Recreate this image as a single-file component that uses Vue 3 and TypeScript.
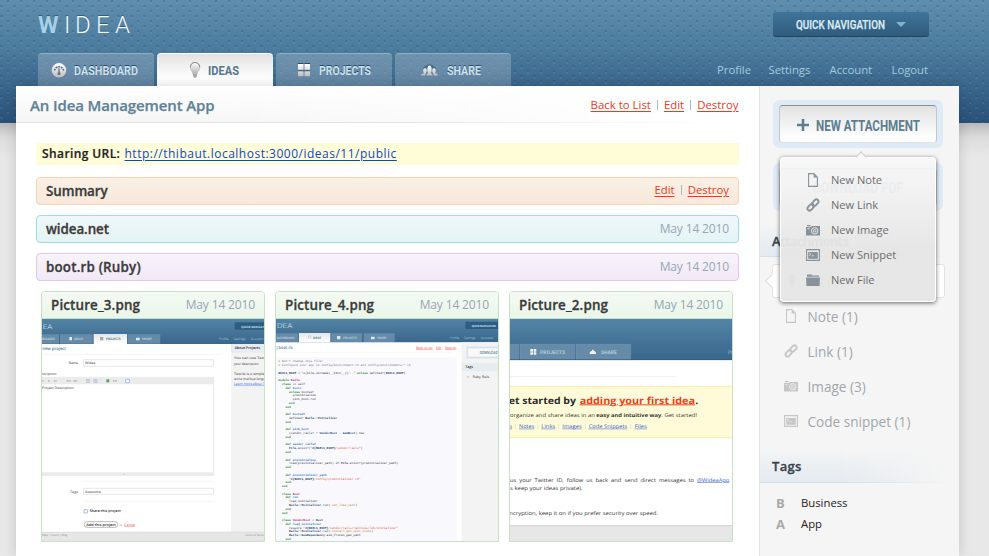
<script setup lang="ts">
type Segment = [kind: string, text: string]
interface Tab { label: string; width: number; icon: string; active?: boolean }
interface Label { x: number; y: number; w: number; text: string; cls: string }

const tabs: Tab[] = [
  { label: 'DASHBOARD', width: 64, icon: 'gauge' },
  { label: 'IDEAS', width: 31, icon: 'bulb', active: true },
  { label: 'PROJECTS', width: 52, icon: 'grid' },
  { label: 'SHARE', width: 34, icon: 'people' },
]
const userLinks = ['Profile', 'Settings', 'Account', 'Logout']
const menu = [
  { icon: 'note', label: 'New Note' },
  { icon: 'link', label: 'New Link' },
  { icon: 'image', label: 'New Image' },
  { icon: 'snippet', label: 'New Snippet' },
  { icon: 'file', label: 'New File' },
]
const filters = [
  { icon: 'note', label: 'Note (1)' },
  { icon: 'link', label: 'Link (1)' },
  { icon: 'image', label: 'Image (3)' },
  { icon: 'snippet', label: 'Code snippet (1)' },
]
const tags = [
  { letter: 'B', name: 'Business' },
  { letter: 'A', name: 'App' },
]
const pictures = [
  { name: 'Picture_3.png', box: '36 102 666 666' },
  { name: 'Picture_4.png', box: '33 102 666 666' },
  { name: 'Picture_2.png', box: '30 102 666 666' },
]

const l = (x: number, y: number, w: number, text: string, cls: string): Label => ({ x, y, w, text, cls })

const formLabels: Label[] = [
  l(38, 131, 29, 'EA', 'logo'),
  l(634, 128, 84, 'QUICK NAVIGATION', 'nav'),
  l(22, 166, 52, 'SHBOARD', 'tab'), l(132, 166, 27, 'IDEAS', 'tab'),
  l(228, 166, 44, 'PROJECTS', 'tab-on'), l(336, 166, 29, 'SHARE', 'tab'),
  l(566, 165, 30, 'Profile', 'user'), l(611, 165, 36, 'Settings', 'user'), l(662, 165, 38, 'Account', 'user'),
  l(37, 196, 71, 'new project', 'head'), l(614, 193, 76, 'About Projects', 'bold'),
  l(116, 238, 28, 'Name', 'body'), l(165, 237, 31, 'Widea', 'body'), l(30, 270, 49, 'escription', 'body'),
  l(36, 313, 95, 'Project Description', 'body'), l(120, 625, 24, 'Tags', 'body'), l(165, 623, 48, 'Awesome', 'body'),
  l(179, 682, 93, 'Share this project', 'bold'), l(169, 722, 88, 'Add this project', 'bold'),
  l(268, 722, 10, 'or', 'dim'), l(283, 722, 32, 'Cancel', 'red'),
  l(612, 223, 96, 'You can use Texti', 'body'), l(612, 239, 76, 'your description.', 'body'),
  l(612, 271, 92, 'Textile is a simple', 'body'), l(612, 286, 94, 'write markup langu', 'body'),
  l(612, 301, 92, 'Learn more about T', 'blue'),
  l(36, 754, 76, 'Help | Forum | Blog', 'dim'), l(645, 754, 58, 'Terms of Servic', 'dim'),
]
const codeLabels: Label[] = [
  l(36, 129, 46, 'DEA', 'logo'), l(620, 125, 72, 'QUICK NAVIGATION', 'nav'),
  l(36, 163, 52, 'DASHBOARD', 'tab'), l(144, 163, 24, 'IDEAS', 'tab-on'),
  l(234, 163, 41, 'PROJECTS', 'tab'), l(337, 163, 27, 'SHARE', 'tab'),
  l(555, 162, 28, 'Profile', 'user'), l(597, 162, 35, 'Settings', 'user'), l(647, 162, 37, 'Account', 'user'),
  l(34, 192, 49, ') boot.rb', 'head'),
  l(453, 191, 50, 'Back to List', 'red'), l(513, 191, 16, 'Edit', 'red'), l(540, 191, 34, 'Destroy', 'red'),
  l(644, 206, 54, 'DOWNLOAD', 'head'), l(601, 250, 23, 'Tags', 'bold'), l(606, 278, 6, 'R', 'dim'), l(623, 278, 49, 'Ruby, Rails', 'body'),
]
const startLabels: Label[] = [
  l(120, 207, 75, 'PROJECTS', 'tab big'), l(303, 207, 47, 'SHARE', 'tab big'), l(684, 206, 42, 'Profile', 'user big'),
  l(26, 356, 202, 'et started by', 'title'), l(239, 356, 346, 'adding your first idea', 'title-link'), l(586, 356, 9, '.', 'title'),
  l(30, 395, 255, 'organize and share ideas in an', 'text'), l(289, 395, 195, 'easy and intuitive way', 'text strong'),
  l(484, 395, 107, '. Get started!', 'text'),
  l(29, 430, 7, 's', 'text blue'), l(45, 430, 3, '|', 'text'), l(57, 430, 46, 'Notes', 'text blue'), l(112, 430, 3, '|', 'text'),
  l(124, 430, 42, 'Links', 'text blue'), l(175, 430, 3, '|', 'text'), l(187, 430, 58, 'Images', 'text blue'),
  l(254, 430, 3, '|', 'text'), l(266, 430, 116, 'Code Snippets', 'text blue'), l(391, 430, 3, '|', 'text'), l(404, 430, 36, 'Files', 'text blue'),
  l(30, 591, 552, 'us  your  Twitter  ID,  follow  us  back  and  send  direct  messages  to', 'text'), l(591, 591, 97, '@WideaApp', 'text blue'),
  l(30, 616, 218, 's keep your ideas private).', 'text'),
  l(28, 691, 446, 'ncryption, keep it on if you prefer security over speed.', 'text'),
]

const k = (text: string): Segment => ['key', text]
const f = (text: string): Segment => ['fn', text]
const s = (text: string): Segment => ['str', text]
const p = (text: string): Segment => ['plain', text]
const c = (text: string): Segment => ['const', text]
const y = (text: string): Segment => ['sym', text]
const code: Segment[][] = [
  [['com', "# Don't change this file!"]],
  [['com', '# Configure your app in config/environment.rb and config/environments/*.rb']],
  [],
  [c('RAILS_ROOT'), p(' = '), s('"'), p('#{File.dirname(__FILE__)}'), s('/.."'), k(' unless '), p('defined?('), c('RAILS_ROOT'), p(')')],
  [],
  [k('module '), ['cls', 'Rails']],
  [k('  class '), p('<< self')],
  [k('    def '), f('boot!')],
  [k('      unless '), p('booted?')],
  [p('        preinitialize')],
  [p('        pick_boot.run')],
  [k('      end')],
  [k('    end')],
  [],
  [k('    def '), f('booted?')],
  [p('      defined? '), c('Rails::Initializer')],
  [k('    end')],
  [],
  [k('    def '), f('pick_boot')],
  [p('      (vendor_rails? ? '), c('VendorBoot'), p(' : '), c('GemBoot'), p(').new')],
  [k('    end')],
  [],
  [k('    def '), f('vendor_rails?')],
  [c('      File'), p('.exist?('), s('"'), c('#{RAILS_ROOT}'), s('/vendor/rails"'), p(')')],
  [k('    end')],
  [],
  [k('    def '), f('preinitialize')],
  [p('      load(preinitializer_path) '), k('if '), c('File'), p('.exist?(preinitializer_path)')],
  [k('    end')],
  [],
  [k('    def '), f('preinitializer_path')],
  [s('      "'), c('#{RAILS_ROOT}'), s('/config/preinitializer.rb"')],
  [k('    end')],
  [k('  end')],
  [],
  [k('  class '), ['cls', 'Boot']],
  [k('    def '), f('run')],
  [p('      load_initializer')],
  [c('      Rails::Initializer'), p('.run('), y(':set_load_path'), p(')')],
  [k('    end')],
  [k('  end')],
  [],
  [k('  class '), ['cls', 'VendorBoot'], p(' < '), c('Boot')],
  [k('    def '), f('load_initializer')],
  [p('      require '), s('"'), c('#{RAILS_ROOT}'), s('/vendor/rails/railties/lib/initializer"')],
  [c('      Rails::Initializer'), p('.run('), y(':install_gem_spec_stubs'), p(')')],
  [c('      Rails::GemDependency'), p('.add_frozen_gem_path')],
  [k('    end')],
]
</script>

<template>
  <svg class="defs" aria-hidden="true">
    <defs>
      <linearGradient id="silver" x1="0" y1="0" x2="0" y2="1">
        <stop offset="0" stop-color="#fff" /><stop offset="1" stop-color="#bdbdbd" />
      </linearGradient>
      <linearGradient id="sky" x1="0" y1="0" x2="0" y2="1">
        <stop offset="0" stop-color="#5384a5" /><stop offset="1" stop-color="#3a668c" />
      </linearGradient>
      <linearGradient id="bulb-fill" x1="0" y1="0" x2="0" y2="1">
        <stop offset="0" stop-color="#fff" /><stop offset="1" stop-color="#b5b5b5" />
      </linearGradient>
      <linearGradient id="tab-fill" x1="0" y1="0" x2="0" y2="1">
        <stop offset="0" stop-color="#e6e6e6" /><stop offset="1" stop-color="#fff" />
      </linearGradient>
    </defs>
    <symbol id="note" viewBox="0 0 14 14">
      <path d="M2.600.600h5.200l3.600 3.600v9.200H2.600z" fill="none" stroke="currentColor" stroke-width="1.100" />
      <path d="M7.600.600v3.900h3.900z" fill="currentColor" />
    </symbol>
    <symbol id="link" viewBox="0 0 14 14">
      <g fill="none" stroke="currentColor" stroke-width="1.900" stroke-linecap="round">
        <path d="M6.100 5.100 8.700 2.200c2.200-2.100 5.200.500 3.300 2.700L9.700 7.400C8.700 8.400 7.300 8.300 6.500 7.400" />
        <path d="M7.900 8.900 5.300 11.800C3.100 13.900.100 11.300 2 9.100L4.300 6.600C5.300 5.600 6.700 5.700 7.500 6.600" />
      </g>
    </symbol>
    <symbol id="image" viewBox="0 0 14 14">
      <path d="M0 4h5l1-1h8v9.500H0z M1 2h3.500v1.200H1z" fill="currentColor" />
      <circle cx="8.700" cy="7.800" r="3.200" fill="none" stroke="#f1f1f1" stroke-width=".9" />
      <circle cx="8.700" cy="7.800" r="1.300" fill="none" stroke="#f1f1f1" stroke-width=".8" />
      <path d="M1.500 5.200h2v1h-2z" fill="#f1f1f1" />
    </symbol>
    <symbol id="snippet" viewBox="0 0 14 14">
      <path d="M.6 1.600h12.800v10.800H.6z" fill="none" stroke="currentColor" stroke-width="1.100" />
      <path d="M2.200 4h9.600v6.800H2.200z" fill="currentColor" />
      <path d="m3.300 5 1.600 1.300-1.600 1.300M5.800 7.800h2" fill="none" stroke="#f1f1f1" stroke-width=".8" />
    </symbol>
    <symbol id="file" viewBox="0 0 14 14">
      <path d="M1 1.500h4.500l.8 1H13v1.300H1z M0 4.600h14L13.500 13H.5z" fill="currentColor" />
    </symbol>
    <symbol id="bulb" viewBox="0 0 14 18">
      <path d="M4.700 12.500C4.500 9.800 2 8.200 2 5.400a5 4.900 0 0 1 10 0c0 2.800-2.500 4.400-2.700 7.100z" fill="url(#bulb-fill)" stroke="#b3b3b3" stroke-width=".8" />
      <path d="M2 5.400a5 4.900 0 0 1 10 0" fill="none" stroke="#888" />
      <path d="M4.800 12.600h4.400v2L8 16.600H6l-1.200-2z" fill="#a9a9a9" />
    </symbol>
    <symbol id="bulb-solid" viewBox="0 0 14 18">
      <path d="M4.700 12.500C4.500 9.800 2 8.200 2 5.400a5 4.900 0 0 1 10 0c0 2.800-2.500 4.400-2.700 7.100v2L8 16.600H6l-1.300-2z" fill="currentColor" />
    </symbol>
    <symbol id="gauge" viewBox="0 0 16 16">
      <circle cx="8" cy="8.300" r="7.200" fill="url(#silver)" />
      <path d="M3.400 8.500a4.700 4.700 0 0 1 9.200 0" fill="none" stroke="#5c7287" stroke-width="1.500" stroke-dasharray="2 .7" />
      <path d="M8 6.300v4" stroke="#5c7287" stroke-width="1.300" /><circle cx="8" cy="11.500" r="1.500" fill="#5c7287" />
    </symbol>
    <symbol id="grid" viewBox="0 0 14 14">
      <path d="M1 0h5.500v1H1zM7.500 0H13v1H7.500zM1 7.400h12v1H1z" fill="#244b68" />
      <path d="M1 1h5.500v5.700H1zM7.500 1H13v5.700H7.500zM1 8.300h5.500v5H1zM7.500 8.300H13v5H7.500z" fill="url(#silver)" />
    </symbol>
    <symbol id="people" viewBox="0 0 18 14">
      <path d="M5.500 1.500 9 0l3.500 1.500L16 4l-2 3H4L2 4z" fill="#244b68" opacity=".5" />
      <path d="M5.700 12.500c0-2 1.800-1.600 1.800-3C6 8 6.300 1.700 9 1.700s3 6.300 1.500 7.800c0 1.400 1.800 1 1.800 3zM0 12.500c.2-2.400 3-1.500 3-3-1.300-2-.8-5 1.300-5C6 4.500 6 6 6 7.300c0 2-1.700 2.600-1.700 5.200zM18 12.500c-.2-2.400-3-1.500-3-3 1.300-2 .8-5-1.300-5C12 4.500 12 6 12 7.300c0 2 1.700 2.600 1.700 5.200z" fill="url(#silver)" />
    </symbol>
  </svg>

  <div class="screen">
    <header class="top">
      <div class="brand-row">
        <svg class="logo" width="100" height="28" role="img" aria-label="Widea">
          <g class="logo-shade" aria-hidden="true"><text y="20.500" x="0" class="w">W</text><text y="20.500" x="26 37 58 77">IDEA</text></g>
          <g class="logo-text"><text y="21.500" x="0" class="w">W</text><text y="21.500" x="26 37 58 77">IDEA</text></g>
        </svg>
        <button class="quick">
          <svg width="89" height="16"><text x="0" y="13" textLength="89" lengthAdjust="spacingAndGlyphs">QUICK NAVIGATION</text></svg>
          <span class="arrow" />
        </button>
      </div>
      <div class="nav-row">
        <nav class="tabs">
          <a v-for="t in tabs" :key="t.label" class="tab" :class="[t.icon + '-tab', { active: t.active }]">
            <svg class="tab-icon" :class="t.icon"><use :href="'#' + t.icon" /></svg>
            <svg class="tab-label" :width="t.width" height="18">
              <text v-if="!t.active" class="shade" x="0" y="12.500" :textLength="t.width" lengthAdjust="spacingAndGlyphs" aria-hidden="true">{{ t.label }}</text>
              <text x="0" y="13.500" :textLength="t.width" lengthAdjust="spacingAndGlyphs">{{ t.label }}</text>
            </svg>
          </a>
        </nav>
        <nav class="user"><a v-for="u in userLinks" :key="u" :class="u.toLowerCase()">{{ u }}</a></nav>
      </div>
    </header>

    <div class="page">
      <main class="main">
        <div class="title-bar">
          <h1>An Idea Management App</h1>
          <div class="actions"><a>Back to List</a><i /><a>Edit</a><i /><a>Destroy</a></div>
        </div>
        <div class="content">
          <p class="sharing"><b>Sharing URL:</b><a>http://thibaut.localhost:3000/ideas/11/public</a></p>
          <section class="bar peach"><h2>Summary</h2><div class="actions"><a>Edit</a><i /><a>Destroy</a></div></section>
          <section class="bar aqua"><h2>widea.net</h2><time>May 14 2010</time></section>
          <section class="bar violet"><h2 class="wide">boot.rb (Ruby)</h2><time>May 14 2010</time></section>
          <div class="pictures">
            <article v-for="(pic, i) in pictures" :key="pic.name" class="card">
              <div class="card-head"><h2>{{ pic.name }}</h2><time>May 14 2010</time></div>
              <svg class="thumb" :viewBox="pic.box">
                <template v-if="i === 0">
                  <path fill="#fff" d="M30 102h680v670H30z" /><path fill="url(#sky)" d="M30 102h680v75H30z" />
                  <path fill="#668ba8" d="M30 148h57v28H30zM90 148h98v28H90zM293 148h98v28H293z" />
                  <path fill="url(#tab-fill)" d="M191 147h100v30H191z" />
                  <rect x="614" y="112" width="110" height="22" rx="2" fill="#2e5d82" />
                  <path fill="#f3f3f3" d="M603 177h100v564H603z" /><path fill="#e7edf1" d="M603 177h100v26H603z" />
                  <path stroke="#e3e3e3" d="M36 208h540M160 589h392M160 649h392" />
                  <path fill="#dfeaf0" d="M118 156h8v10h-8zM318 158h11v8h-11z" /><path fill="#aaa" d="M210 156h10v10h-10z" />
                  <path fill="#fff" stroke="#ddd" stroke-width="2" d="M161 224h390v20H161zM161 610h390v18H161zM30 277h521v294H30z" />
                  <path fill="#ebebeb" d="M30 278h520v20H30zM30 562h520v8H30z" />
                  <path stroke="#999" stroke-width="3" stroke-dasharray="4 1" d="M37 288h4M54 288h6M72 288h8M110 288h12M130 288h12M249 288h12" />
                  <path stroke="#9bb4d3" stroke-width="2" d="M168 284h12M190 284h12M168 288h12M190 288h12M168 292h12M190 292h12" /><path fill="#59a079" d="M229 283h9v9h-9z" />
                  <path fill="#fff" stroke="#7ba3dc" stroke-width="2" d="M287 283h11v10h-11zM162 674h10v10h-10z" />
                  <path fill="#aaa" d="M281 566h4v2h-4z" />
                  <rect x="163" y="710" width="100" height="17" rx="8" fill="#fff" stroke="#777" stroke-width="1.500" />
                  <path fill="#e6e6e6" d="M30 741h680v30H30z" /><path stroke="#ccc" d="M30 741h680" />
                  <text v-for="(t, n) in formLabels" :key="n" :x="t.x" :y="t.y" :textLength="t.w" lengthAdjust="spacingAndGlyphs" :class="t.cls">{{ t.text }}</text>
                </template>
                <template v-else-if="i === 1">
                  <path fill="#fff" d="M30 102h680v670H30z" /><path fill="url(#sky)" d="M30 102h680v70H30z" />
                  <path fill="#668ba8" d="M30 145h70v26H30zM199 145h92v26h-92zM296 145h93v26h-93z" />
                  <path fill="url(#tab-fill)" d="M102 144h94v28h-94z" />
                  <rect x="601" y="110" width="110" height="22" rx="2" fill="#2e5d82" />
                  <path fill="#dfeaf0" d="M216 153h10v10h-10zM318 155h11v8h-11z" /><circle cx="134" cy="156" r="4" fill="#eee" stroke="#999" />
                  <path fill="#f3f3f3" d="M590 172h115v600H590z" /><path fill="#e6ecf0" d="M590 235h112v24H590z" />
                  <rect x="603" y="184" width="110" height="37" rx="5" fill="#dceaf5" /><rect x="608" y="189" width="110" height="27" rx="3" fill="#f9f9f9" stroke="#bbb" />
                  <path stroke="#e6e6e6" d="M30 202h530" /><path fill="#f8f8fd" d="M30 216h545v556H30z" />
                  <text v-for="(t, n) in codeLabels" :key="n" :x="t.x" :y="t.y" :textLength="t.w" lengthAdjust="spacingAndGlyphs" :class="t.cls">{{ t.text }}</text>
                  <text v-for="(line, n) in code" :key="'c' + n" class="code" x="40" :y="232 + n * 11.340"><tspan v-for="(seg, m) in line" :key="m" :class="seg[0]">{{ seg[1] }}</tspan></text>
                </template>
                <template v-else>
                  <path fill="#fff" d="M28 102h680v670H28z" /><path fill="url(#sky)" d="M28 102h680v123H28z" />
                  <path fill="#668ba8" stroke="#89a8bf" d="M20 178h36v46H20zM60 178h164v46H60zM228 178h164v46H228z" />
                  <path stroke="#2c5678" stroke-width="2" d="M28 224h680" />
                  <path fill="#f0f3f4" d="M91 192h8v8h-8zM101 192h8v8h-8zM91 202h8v7h-8zM101 202h8v7h-8zM269 207v-4l4-5h3v-4h5v4h3l4 5v4z" />
                  <path stroke="#e9e9e9" stroke-width="2" d="M28 275h500" />
                  <path fill="#fffbd8" d="M28 304h680v154H28z" /><path stroke="#ffe9a8" stroke-width="3" d="M28 304h680M28 458h680" />
                  <path fill="#e7e7e7" d="M28 721h680v50H28z" /><path stroke="#d4d4d4" stroke-width="3" d="M28 722h680" />
                  <text v-for="(t, n) in startLabels" :key="n" :x="t.x" :y="t.y" :textLength="t.w" lengthAdjust="spacingAndGlyphs" :class="t.cls">{{ t.text }}</text>
                </template>
              </svg>
            </article>
          </div>
        </div>
      </main>

      <aside class="side">
        <div class="glow">
          <button class="big-button">
            <svg class="plus" viewBox="0 0 12 12"><path d="M6 0v12M0 6h12" stroke="#5b7f90" stroke-width="2.600" /></svg>
            <svg width="104" height="18"><text x="0" y="14.500" textLength="104" lengthAdjust="spacingAndGlyphs">NEW ATTACHMENT</text></svg>
          </button>
          <div class="popover">
            <span class="tip" />
            <a v-for="m in menu" :key="m.label" :class="m.icon"><svg><use :href="'#' + m.icon" /></svg>{{ m.label }}</a>
          </div>
        </div>
        <div class="glow">
          <button class="big-button download"><svg width="90" height="18"><text x="0" y="14" textLength="90" lengthAdjust="spacingAndGlyphs">DOWNLOAD PDF</text></svg></button>
        </div>
        <h3 class="attachments">Attachments</h3>
        <div class="filters">
          <a class="filter on"><span class="notch" /><svg><use href="#bulb-solid" /></svg>All (6)</a>
          <a v-for="m in filters" :key="m.label" class="filter"><svg><use :href="'#' + m.icon" /></svg>{{ m.label }}</a>
        </div>
        <h3>Tags</h3>
        <ul class="tags"><li v-for="t in tags" :key="t.name"><b>{{ t.letter }}</b>{{ t.name }}</li></ul>
      </aside>
    </div>
  </div>
</template>

<style>
body { background: #e8e8e8; overflow: hidden; }
</style>

<style scoped>
.defs { position: absolute; width: 0; height: 0; }
.screen {
  height: 556px; overflow: hidden; box-sizing: border-box;
  font-family: "Open Sans", "Noto Sans", sans-serif; color: #333;
  background: linear-gradient(#b9b9b9, #dcdcdc 14px, #e8e8e8 34px) 0 123px / 100% 433px no-repeat;
}
h1, h2, h3, p, ul { margin: 0; padding: 0; }
button { border: 0; padding: 0; }
.top {
  height: 123px; box-sizing: border-box; padding: 12px 60px 0 38px;
  background:
    radial-gradient(circle at 1.500px 6px, rgba(25, 65, 100, .2) 0 1px, transparent 1.500px) 0 0 / 13px 10px,
    radial-gradient(circle at 8px 1px, rgba(25, 65, 100, .2) 0 1px, transparent 1.500px) 0 0 / 13px 10px,
    radial-gradient(circle at 1.500px 8px, rgba(135, 190, 220, .12) 0 1px, transparent 1.500px) 0 0 / 13px 10px,
    radial-gradient(circle at 8px 3px, rgba(135, 190, 220, .12) 0 1px, transparent 1.500px) 0 0 / 13px 10px,
    linear-gradient(#5f8dad, #4b7b9d 40%, #386389 75%, #2a5078);
}
.brand-row { display: flex; justify-content: space-between; height: 41px; align-items: flex-start; }
.logo { display: block; margin-top: -1px; }
.logo text { font: 300 24px Roboto, sans-serif; }
.logo text.w { font-weight: 700; font-size: 23.500px; }
.logo-shade { fill: #2c5576; opacity: .8; }
.logo-text { fill: #f2f9fc; }
.logo-text .w { fill: #a5d0e6; }
.quick {
  width: 156px; height: 25px; border-radius: 3px; display: flex; align-items: center; padding-left: 23px;
  background: linear-gradient(#40749a, #2f5b7c); border-bottom: 1px solid #23425c; box-sizing: border-box;
}
.quick svg { display: block; overflow: visible; }
.quick text { font: 500 12.500px Roboto, sans-serif; fill: #dcecf5; stroke: #dcecf5; stroke-width: .25; }
.arrow { margin-left: 11px; border: 5px solid transparent; border-top-color: #84b2cc; border-bottom: 0; }
.nav-row { display: flex; justify-content: space-between; height: 33px; }
.tabs { display: flex; gap: 3px; }
.tab {
  width: 116px; height: 33px; box-sizing: border-box; border-radius: 4px 4px 0 0; display: flex; align-items: center; justify-content: center;
  background: linear-gradient(rgba(170, 190, 205, .4), rgba(150, 170, 190, .42)); border-top: 1px solid #8fafc4; padding-right: 4px;
}
.tab.grid-tab { padding-right: 0; }
.tab.active { background: linear-gradient(#e2e2e2, #fff 75%); border-top-color: #fff; }
.tab-icon { width: 14px; height: 14px; margin-right: 8px; flex: none; }
.tab-icon.gauge { width: 16px; height: 16px; margin-right: 7px; }
.tab-icon.bulb { width: 14px; height: 17px; margin-right: 6px; }
.tab-icon.people { width: 17px; height: 13px; margin-right: 9px; }
.tab-label { overflow: visible; display: block; }
.tab-label text { font: 700 13.500px Roboto, sans-serif; fill: #cde1ec; }
.tab-label text.shade { fill: #294e6b; }
.tab.active text { fill: #53788b; }
.user { display: flex; font-size: 11.300px; line-height: 15px; padding-top: 9px; color: #a3c9df; height: 15px; }
.user a { width: 61px; }
.user .profile { width: 51.500px; }
.user .logout { width: 37.500px; margin-left: 1px; }
.page { display: flex; width: 943px; height: 470px; margin: -37px 0 0 16px; box-shadow: 0 0 12px rgba(0, 0, 0, .16); background: #fff; position: relative; }
.main { width: 743px; flex: none; }
.title-bar {
  height: 37px; box-sizing: border-box; padding: 0 20.500px 0 14px; display: flex; justify-content: space-between; align-items: center;
  background: linear-gradient(90deg, transparent 20%, #fff 90%), linear-gradient(#fff, #f5f5f5);
  border-bottom: 1px solid; border-image: linear-gradient(90deg, #e4e4e4 50%, #fff 95%) 1;
}
h1 { font-size: 15px; font-weight: 600; line-height: 20px; letter-spacing: -.12px; color: #5f8397; -webkit-text-stroke: .25px #5f8397; padding-top: 2px; }
.actions { display: flex; align-items: center; font-size: 11.400px; line-height: 14px; color: #eb3a1c; padding-top: 1px; }
.actions a, .sharing a { text-decoration: underline; text-underline-offset: 2px; text-decoration-thickness: 1px; }
.actions i { width: 1px; height: 10px; background: #a8b9c2; margin: 0 6px; }
.content { padding: 20px; }
.sharing { height: 22px; box-sizing: border-box; background: #fffcd8; display: flex; align-items: center; font-size: 12px; padding: 0 0 2px 6px; margin-bottom: 12px; }
.sharing b { font-weight: 600; letter-spacing: .4px; color: #222; width: 82.500px; -webkit-text-stroke: .2px #222; }
.sharing a { color: #0b48c8; letter-spacing: .5px; }
.bar { height: 28px; box-sizing: border-box; border: 1px solid; border-radius: 4px; display: flex; align-items: center; justify-content: space-between; margin-bottom: 10px; padding: 0 9px; }
h2 { font-size: 13.400px; font-weight: 600; letter-spacing: -.08px; color: #3b3b3b; -webkit-text-stroke: .3px #3b3b3b; line-height: 20px; }
h2.wide { letter-spacing: .18px; }
time { font-size: 12px; letter-spacing: -.14px; color: #94a7b6; line-height: 18px; }
.peach { border-color: #f6d4b5; background: linear-gradient(#faf0e5, #f7e8da); }
.aqua { border-color: #97e1e2; background: linear-gradient(#f0f7f9, #e4f4f5); }
.violet { border-color: #dfc9e6; background: linear-gradient(#f8f3fa, #f2e8f6); }
.bar .actions { margin-bottom: 3px; }
.pictures { display: flex; gap: 10px; padding-left: 5px; }
.card { width: 224px; height: 251px; box-sizing: border-box; border: 1px solid #c5e2c5; border-radius: 4px 4px 0 0; flex: none; }
.card-head { height: 27px; box-sizing: border-box; border-bottom: 1px solid #c5e2c5; background: linear-gradient(#f5faf4, #eaf6e9); display: flex; align-items: center; justify-content: space-between; padding: 0 9px 0 9px; border-radius: 3px 3px 0 0; }
.card h2 { letter-spacing: .15px; }
.thumb { width: 222px; height: 222px; display: block; }
.thumb text { font: 10.500px "Open Sans", sans-serif; fill: #333; text-rendering: geometricPrecision; }
.thumb .logo { font: 300 20px Roboto, sans-serif; fill: #dcebf3; }
.thumb .nav { font: 700 9px Roboto, sans-serif; fill: #cfe1ec; }
.thumb .tab { font: 700 10px Roboto, sans-serif; fill: #b7cedd; }
.thumb .tab-on { font: 700 10px Roboto, sans-serif; fill: #53788b; }
.thumb .user { font-size: 9.500px; fill: #a3c9df; }
.thumb .head { font-size: 13px; font-weight: 600; fill: #54788b; }
.thumb .bold { font-weight: 600; fill: #222; }
.thumb .dim { fill: #888; font-size: 9px; }
.thumb .red { fill: #f0403a; text-decoration: underline; }
.thumb .blue { fill: #3767d8; text-decoration: underline; }
.thumb .big { font-size: 15px; }
.thumb .text { font-size: 15.500px; fill: #333; white-space: pre; }
.thumb .text.blue { fill: #3b62d0; }
.thumb .strong { font-weight: 700; }
.thumb .title, .thumb .title-link { font-size: 29px; font-weight: 700; fill: #2c2c2c; }
.thumb .title-link { fill: #ec3e20; text-decoration: underline; }
.thumb .code { font: 8.950px "Liberation Mono", monospace; white-space: pre; }
.code .com { fill: #777; }
.code .key { fill: #1c861c; font-weight: 700; }
.code .fn { fill: #1d6fd0; font-weight: 700; }
.code .str { fill: #ee4a30; }
.code .const { fill: #22396c; font-weight: 700; }
.code .cls { fill: #bb2468; font-weight: 700; }
.code .sym { fill: #cf8128; }
.code .plain { fill: #333; }
.side { width: 200px; box-sizing: border-box; border-left: 1px solid #e3e3e3; background: #f5f5f5; padding-top: 14px; }
.glow { position: relative; width: 170px; height: 48px; box-sizing: border-box; margin: 0 0 15px 13px; padding: 5px 6px; border-radius: 7px; background: #deeaf5; }
.big-button { width: 158px; height: 38px; box-sizing: border-box; border-radius: 4px; border: 1px solid #c6c6c6; border-top-color: #8e8e8e; border-bottom-color: #e2e2e2; background: linear-gradient(#e2e2e2, #fff 90%); display: flex; align-items: center; padding: 2px 0 0 17px; }
.big-button svg { display: block; }
.big-button text { font: 700 15px Roboto, sans-serif; fill: #5b7f90; }
.plus { width: 12px; height: 12px; margin-right: 7px; }
.download { padding-left: 33px; }
.popover { position: absolute; z-index: 2; left: 7px; top: 57px; width: 156px; height: 145px; box-sizing: border-box; border: 1px solid #fff; border-radius: 4px; background: linear-gradient(rgba(248, 248, 248, .94), rgba(230, 230, 230, .96) 65%); box-shadow: 0 1px 4px rgba(0, 0, 0, .6); padding: 9px 0 0 25px; }
.popover a { display: flex; align-items: center; height: 25px; font-size: 11.100px; color: #6d6d6d; letter-spacing: -.03px; }
.popover svg { width: 14px; height: 14px; color: #8a9299; margin-right: 11px; }
.tip { position: absolute; width: 8px; height: 8px; top: -5px; left: 76px; transform: rotate(45deg); background: #f8f8f8; border: solid #ccc; border-width: 1px 0 0 1px; box-sizing: border-box; }
h3 { height: 32px; box-sizing: border-box; padding: 6px 0 0 12px; font-size: 13px; line-height: 18px; font-weight: 600; letter-spacing: .3px; color: #39444d; -webkit-text-stroke: .3px #39444d; background: linear-gradient(90deg, transparent 40%, #f5f5f5 95%), linear-gradient(#f3f4f5, #e3eaf0); border-bottom: 1px solid; border-image: linear-gradient(90deg, #d3e0ea 50%, #f5f5f5 95%) 1; }
.attachments { letter-spacing: -.38px; margin-top: -1px; padding-top: 7px; }
.filters { padding: 7px 0 13px; }
.filter { display: flex; align-items: center; height: 35px; padding: 1px 0 0 24px; box-sizing: border-box; font-size: 13.600px; color: #a3a7ab; }
.filter svg { width: 14px; height: 14px; color: #c7c7c7; margin-right: 9.500px; }
.filter.on { position: relative; height: 34px; margin: 0 14px 0 12px; padding: 0 0 0 12px; background: #fff; border: 1px solid #e3e3e3; border-radius: 3px; color: #5f8397; }
.filter.on svg { color: #5f8397; }
.notch { position: absolute; left: -6px; top: 11px; width: 10px; height: 10px; box-sizing: border-box; transform: rotate(45deg); background: #fff; border: solid #ddd; border-width: 0 0 1px 1px; }
.tags { list-style: none; padding: 9px 0 0 16px; }
.tags li { display: flex; align-items: center; height: 21px; font-size: 11.300px; color: #222; }
.tags b { width: 25px; font-size: 13px; color: #aaa; font-weight: 700; }
</style>
